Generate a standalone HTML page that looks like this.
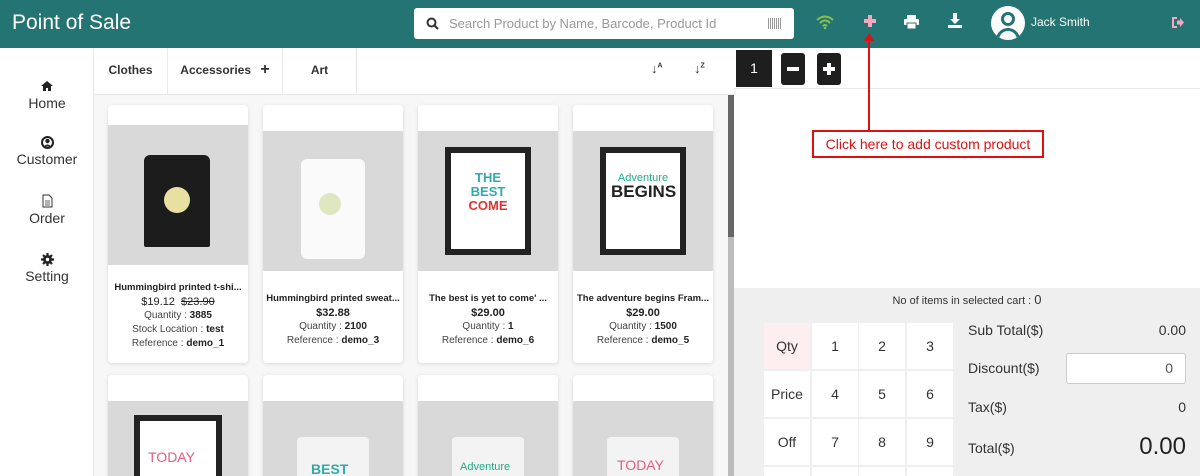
<!DOCTYPE html>
<html style="overflow:hidden"><head><meta charset="utf-8"><style>
*{box-sizing:border-box;margin:0;padding:0}
html,body{width:1200px;height:476px;overflow:hidden}
body{font-family:"Liberation Sans",sans-serif;background:#fff;position:relative}
.abs{position:absolute}
#hdr{left:0;top:0;width:1200px;height:48px;background:#247474}
#side{left:0;top:48px;width:94px;height:428px;background:#fff;border-right:1px solid #e6e6e6}
.nav{position:absolute;left:0;width:94px;text-align:center;color:#333;font-size:14px}
#cats{left:94px;top:48px;width:640px;height:47px;background:#fff;border-bottom:1px solid #e8e8e8}
.cat{position:absolute;top:0;height:46px;line-height:44px;font-size:12px;font-weight:bold;color:#333;text-align:center;border-right:1px solid #e8e8e8}
#grid{left:94px;top:95px;width:634px;height:381px;background:#f7f7f7;overflow:hidden}
.card{position:absolute;width:140px;background:#fff;border-radius:4px;box-shadow:0 1px 4px rgba(0,0,0,.12);overflow:hidden}
.img{position:absolute;left:0;width:140px;height:140px;background:#d9d9d9}
.info{position:absolute;left:0;width:140px;text-align:center;font-size:10px;color:#444;line-height:14px}
.info b{color:#222}
.t{font-weight:bold;color:#222;font-size:9.5px;white-space:nowrap;overflow:hidden}
.key{position:absolute;width:46px;height:46px;background:#fff;text-align:center;line-height:46px;font-size:14px;color:#333}
</style></head><body>
<div id="hdr" class="abs">
 <div class="abs" style="left:12px;top:11px;color:#fff;font-size:21px">Point of Sale</div>
 <div class="abs" style="left:414px;top:8px;width:380px;height:31px;background:#fff;border-radius:3px">
  <svg class="abs" style="left:12px;top:9px" width="13" height="13" viewBox="0 0 13 13"><circle cx="5.5" cy="5.5" r="4" fill="none" stroke="#333" stroke-width="2"/><path d="M8.5 8.5L12 12" stroke="#333" stroke-width="2.2"/></svg>
  <div class="abs" style="left:35px;top:8px;font-size:13px;color:#999">Search Product by Name, Barcode, Product Id</div>
  <div class="abs" style="left:354px;top:10px;width:14px;height:11px;background:repeating-linear-gradient(90deg,#999 0 1px,#fff 1px 2px)"></div>
 </div>
 <svg class="abs" style="left:816px;top:15px" width="18" height="14" viewBox="0 0 18 14"><path d="M1 5Q9-2 17 5M4 8Q9 3 14 8M7 11Q9 9 11 11" fill="none" stroke="#8bc34a" stroke-width="2"/><circle cx="9" cy="13" r="1.3" fill="#8bc34a"/></svg>
 <div class="abs" style="left:864px;top:19px;width:12px;height:4px;background:#f4a7c0"></div>
 <div class="abs" style="left:868px;top:15px;width:4px;height:12px;background:#f4a7c0"></div>
 <svg class="abs" style="left:904px;top:15px" width="15" height="14" viewBox="0 0 15 14"><rect x="3" y="0" width="9" height="4" fill="#fff"/><rect x="0" y="4" width="15" height="6" rx="1" fill="#fff"/><rect x="3" y="8" width="9" height="6" fill="#fff" stroke="#247474"/></svg>
 <svg class="abs" style="left:947px;top:13px" width="16" height="16" viewBox="0 0 16 16"><path d="M6 0h4v6h3l-5 5-5-5h3z" fill="#fff"/><rect x="1" y="12" width="14" height="3" fill="#fff"/></svg>
 <div class="abs" style="left:991px;top:6px;width:34px;height:34px;border-radius:50%;background:#fff;overflow:hidden">
  <div class="abs" style="left:10px;top:6px;width:14px;height:14px;border-radius:50%;border:3px solid #247474"></div>
  <div class="abs" style="left:5px;top:22px;width:24px;height:16px;border-radius:12px 12px 0 0;border:3px solid #247474"></div>
 </div>
 <div class="abs" style="left:1031px;top:15px;color:#fff;font-size:12px">Jack Smith</div>
 <svg class="abs" style="left:1172px;top:17px" width="12" height="11" viewBox="0 0 12 11"><path d="M0 0h5v2H2v7h3v2H0z" fill="#f4a7c0"/><path d="M5 3.5h3V1l4 4.5L8 10V7.5H5z" fill="#f4a7c0"/></svg>
</div>

<div id="side" class="abs">
 <div class="nav" style="top:30px"><svg width="12" height="10" viewBox="0 0 12 10"><path d="M6 0l6 5h-2v5H7V7H5v3H2V5H0z" fill="#222"/></svg><div style="margin-top:1px">Home</div></div>
 <div class="nav" style="top:88px"><svg width="13" height="13" viewBox="0 0 13 13"><circle cx="6.5" cy="6.5" r="5.5" fill="none" stroke="#222" stroke-width="2"/><circle cx="6.5" cy="5" r="2.2" fill="#222"/><path d="M3 10.5Q6.5 6.5 10 10.5" fill="#222"/></svg><div style="margin-top:-1px">Customer</div></div>
 <div class="nav" style="top:146px"><svg width="11" height="14" viewBox="0 0 11 14"><path d="M1 1h6l3 3v9H1z" fill="none" stroke="#333"/><path d="M3 7h5M3 9h5M3 11h5" stroke="#333" stroke-width=".8"/></svg><div style="margin-top:-1px">Order</div></div>
 <div class="nav" style="top:205px"><svg width="13" height="13" viewBox="0 0 13 13"><circle cx="6.5" cy="6.5" r="4.5" fill="#222"/><path d="M6.5 0v13M0 6.5h13M2 2l9 9M11 2l-9 9" stroke="#222" stroke-width="2.2"/><circle cx="6.5" cy="6.5" r="1.7" fill="#fff"/></svg><div style="margin-top:-1px">Setting</div></div>
</div>

<div id="cats" class="abs">
 <div class="cat" style="left:0;width:74px">Clothes</div>
 <div class="cat" style="left:74px;width:115px">Accessories <span style="font-size:16px;margin-left:6px">+</span></div>
 <div class="cat" style="left:189px;width:74px">Art</div>
 <div class="abs" style="left:557px;top:13px;font-size:13px;font-weight:bold;color:#333">↓<sup style="font-size:7px">A</sup></div>
 <div class="abs" style="left:600px;top:13px;font-size:13px;font-weight:bold;color:#333">↓<sup style="font-size:7px">Z</sup></div>
</div>

<div id="grid" class="abs">
 <div class="card" style="left:14px;top:10px;height:258px"><div class="img" style="top:20px"><div class="abs" style="left:36px;top:30px;width:66px;height:92px;background:#1c1c1c;border-radius:6px 6px 2px 2px"></div><div class="abs" style="left:56px;top:62px;width:26px;height:26px;border-radius:50%;background:#e8e0a0"></div></div>
  <div class="info" style="top:176px"><div class="t">Hummingbird printed t-shi...</div><div style="font-size:11px;color:#222">$19.12 &nbsp;<s>$23.90</s></div><div>Quantity : <b>3885</b></div><div>Stock Location : <b>test</b></div><div>Reference : <b>demo_1</b></div></div></div>
 <div class="card" style="left:169px;top:10px;height:258px"><div class="img" style="top:26px"><div class="abs" style="left:38px;top:28px;width:64px;height:100px;background:#fafafa;border-radius:6px"></div><div class="abs" style="left:56px;top:62px;width:22px;height:22px;border-radius:50%;background:#dfe7c0"></div></div>
  <div class="info" style="top:187px"><div class="t">Hummingbird printed sweat...</div><div style="font-size:11px;color:#222;font-weight:bold">$32.88</div><div>Quantity : <b>2100</b></div><div>Reference : <b>demo_3</b></div></div></div>
 <div class="card" style="left:324px;top:10px;height:258px"><div class="img" style="top:26px"><div class="abs" style="left:27px;top:16px;width:86px;height:108px;background:#fff;border:6px solid #222"></div><div class="abs" style="left:38px;top:40px;width:64px;text-align:center;font-size:13px;font-weight:bold;color:#3aa;line-height:14px">THE<br>BEST<br><span style="color:#d33">COME</span></div></div>
  <div class="info" style="top:187px"><div class="t">The best is yet to come' ...</div><div style="font-size:11px;color:#222;font-weight:bold">$29.00</div><div>Quantity : <b>1</b></div><div>Reference : <b>demo_6</b></div></div></div>
 <div class="card" style="left:479px;top:10px;height:258px"><div class="img" style="top:26px"><div class="abs" style="left:27px;top:16px;width:86px;height:108px;background:#fff;border:6px solid #222"></div><div class="abs" style="left:38px;top:40px;width:64px;text-align:center;font-size:11px;color:#2a8;line-height:14px">Adventure<br><span style="font-size:17px;color:#222;font-weight:bold">BEGINS</span></div></div>
  <div class="info" style="top:187px"><div class="t">The adventure begins Fram...</div><div style="font-size:11px;color:#222;font-weight:bold">$29.00</div><div>Quantity : <b>1500</b></div><div>Reference : <b>demo_5</b></div></div></div>
 <div class="card" style="left:14px;top:280px;height:120px"><div class="img" style="top:26px"><div class="abs" style="left:26px;top:14px;width:88px;height:110px;background:#fff;border:6px solid #222"></div><div class="abs" style="left:40px;top:48px;font-size:14px;color:#e06080">TODAY</div></div></div>
 <div class="card" style="left:169px;top:280px;height:120px"><div class="img" style="top:26px"><div class="abs" style="left:34px;top:36px;width:72px;height:80px;background:#f3f3f3;border-radius:4px"></div><div class="abs" style="left:48px;top:60px;font-size:14px;font-weight:bold;color:#3aa">BEST</div></div></div>
 <div class="card" style="left:324px;top:280px;height:120px"><div class="img" style="top:26px"><div class="abs" style="left:34px;top:36px;width:72px;height:80px;background:#f3f3f3;border-radius:4px"></div><div class="abs" style="left:42px;top:60px;font-size:11px;color:#2a8">Adventure</div></div></div>
 <div class="card" style="left:479px;top:280px;height:120px"><div class="img" style="top:26px"><div class="abs" style="left:34px;top:36px;width:72px;height:80px;background:#f3f3f3;border-radius:4px"></div><div class="abs" style="left:44px;top:56px;font-size:14px;color:#e06080">TODAY</div></div></div>
</div>
<div class="abs" style="left:728px;top:95px;width:6px;height:381px;background:#bbb"></div>
<div class="abs" style="left:728px;top:95px;width:6px;height:142px;background:#666"></div>

<div class="abs" style="left:734px;top:48px;width:466px;height:428px;background:#fff"></div>
<div class="abs" style="left:736px;top:50px;width:36px;height:37px;background:#1e1e1e;color:#fff;font-size:14px;text-align:center;line-height:37px">1</div>
<div class="abs" style="left:781px;top:53px;width:24px;height:32px;background:#1e1e1e;border-radius:3px"><div class="abs" style="left:6px;top:14px;width:12px;height:4px;background:#fff"></div></div>
<div class="abs" style="left:817px;top:53px;width:24px;height:32px;background:#1e1e1e;border-radius:3px"><div class="abs" style="left:6px;top:14px;width:12px;height:4px;background:#fff"></div><div class="abs" style="left:10px;top:10px;width:4px;height:12px;background:#fff"></div></div>
<div class="abs" style="left:734px;top:88px;width:466px;height:1px;background:#e8e8e8"></div>
<div class="abs" style="left:868px;top:36px;width:2px;height:95px;background:#d11"></div>
<div class="abs" style="left:864px;top:33px;width:0;height:0;border-left:5px solid transparent;border-right:5px solid transparent;border-bottom:8px solid #d11"></div>
<div class="abs" style="left:812px;top:130px;width:232px;height:28px;border:2px solid #d11;color:#d11;font-size:14px;line-height:24px;text-align:center;background:#fff">Click here to add custom product</div>

<div class="abs" style="left:734px;top:288px;width:466px;height:188px;background:#efefef;overflow:hidden">
<div class="abs" style="left:0;top:4px;width:466px;text-align:center;font-size:11px;color:#333">No of items in selected cart : <span style="font-size:13px">0</span></div>
<div class="key" style="left:30px;top:35px;background:#fdeef0">Qty</div><div class="key" style="left:78px;top:35px">1</div><div class="key" style="left:125px;top:35px">2</div><div class="key" style="left:173px;top:35px">3</div>
<div class="key" style="left:30px;top:83px">Price</div><div class="key" style="left:78px;top:83px">4</div><div class="key" style="left:125px;top:83px">5</div><div class="key" style="left:173px;top:83px">6</div>
<div class="key" style="left:30px;top:131px">Off</div><div class="key" style="left:78px;top:131px">7</div><div class="key" style="left:125px;top:131px">8</div><div class="key" style="left:173px;top:131px">9</div>
<div class="key" style="left:30px;top:179px"></div><div class="key" style="left:78px;top:179px"></div><div class="key" style="left:125px;top:179px"></div><div class="key" style="left:173px;top:179px"></div>
<div class="abs" style="left:234px;top:34px;font-size:14px;color:#333">Sub Total($)</div><div class="abs" style="left:386px;top:34px;width:66px;text-align:right;font-size:14px;color:#333">0.00</div>
<div class="abs" style="left:234px;top:72px;font-size:14px;color:#333">Discount($)</div>
<div class="abs" style="left:332px;top:65px;width:120px;height:31px;background:#fff;border:1px solid #ccc;border-radius:3px;text-align:right;padding-right:12px;line-height:29px;font-size:14px;color:#555">0</div>
<div class="abs" style="left:234px;top:111px;font-size:14px;color:#333">Tax($)</div><div class="abs" style="left:386px;top:111px;width:66px;text-align:right;font-size:14px;color:#333">0</div>
<div class="abs" style="left:234px;top:152px;font-size:14px;color:#333">Total($)</div><div class="abs" style="left:352px;top:145px;width:100px;text-align:right;font-size:24px;color:#222">0.00</div>
</div>
</body></html>
